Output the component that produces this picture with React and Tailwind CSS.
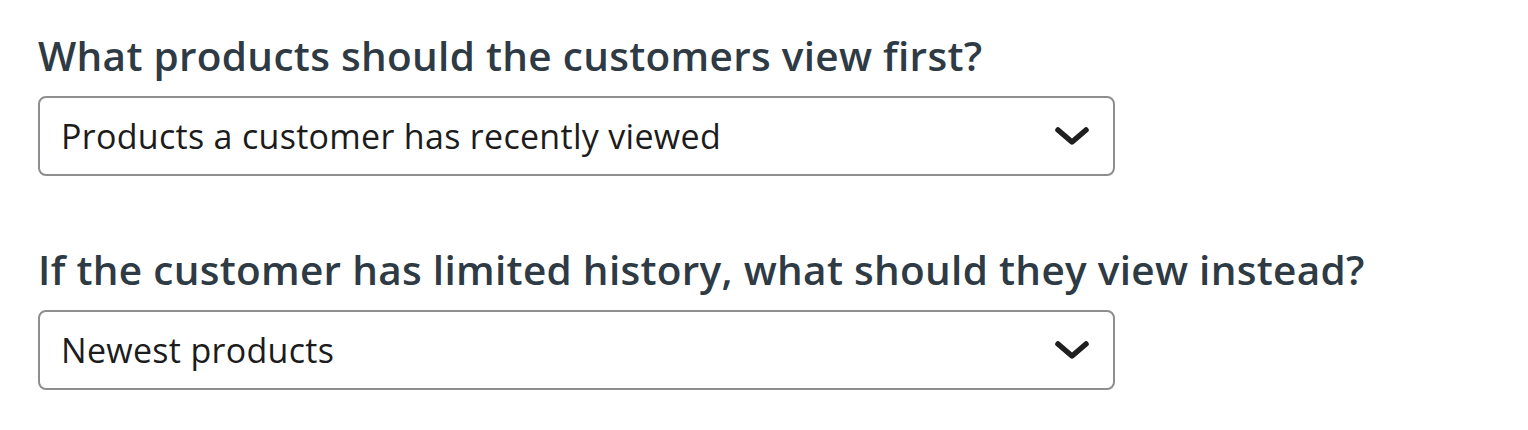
import React from 'react';

const Chevron = () => (
  <svg width="36" height="24" viewBox="0 0 36 24" fill="none">
    <path d="M4 6 L18 18 L32 6" stroke="#1f1f1f" strokeWidth="5.5" strokeLinecap="round" strokeLinejoin="round" />
  </svg>
);

const Question = ({ label, value }) => (
  <div className="flex flex-col">
    <h2 className="text-[40.5px] leading-[46px] font-semibold text-[#2e3a44] tracking-[0.3px]">{label}</h2>
    <div className="mt-[17px] w-[1077px] h-[80px] rounded-[8px] border-2 border-[#8e8e8e] flex items-center justify-between pl-[21px] pr-[23px]">
      <span className="text-[34px] text-[#1c1c1c] tracking-[0.3px]">{value}</span>
      <Chevron />
    </div>
  </div>
);

export default function App() {
  return (
    <div className="w-[1528px] h-[430px] bg-white pl-[38px] pt-[33px] flex flex-col gap-[71px]" style={{ fontFamily: '"Open Sans", sans-serif' }}>
      <Question label="What products should the customers view first?" value="Products a customer has recently viewed" />
      <Question label="If the customer has limited history, what should they view instead?" value="Newest products" />
    </div>
  );
}
